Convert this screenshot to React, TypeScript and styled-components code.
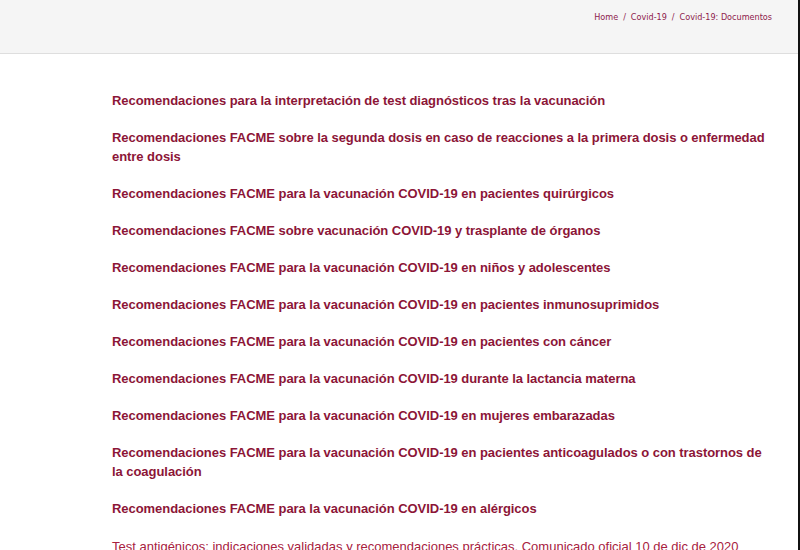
import React from "react";
import styled, { createGlobalStyle } from "styled-components";

const GlobalStyle = createGlobalStyle`
    html, body {
        margin: 0;
        padding: 0;
        background: #ffffff;
        font-family: "Liberation Sans", Arial, sans-serif;
    }
`;

const Page = styled.div`
    display: flex;
    width: 800px;
    height: 550px;
    overflow: hidden;
`;

const Main = styled.div`
    flex: 1;
    display: flex;
    flex-direction: column;
    min-width: 0;
`;

const EdgeBar = styled.div`
    flex-shrink: 0;
    width: 2px;
    background: #111111;
`;

const Header = styled.header`
    flex-shrink: 0;
    display: flex;
    justify-content: flex-end;
    height: 54px;
    padding: 12px 26px 0 0;
    box-sizing: border-box;
    background: #f5f5f5;
    border-bottom: 1px solid #dedede;
`;

const Breadcrumb = styled.nav`
    display: flex;
    gap: 5px;
    font-family: "DejaVu Sans", Verdana, sans-serif;
    font-size: 8.1px;
    line-height: 11px;
    color: #8e1a4c;
`;

const Crumb = styled.a`
    color: inherit;
    text-decoration: none;
`;

const Sep = styled.span`
    color: #8e1a4c;
`;

const Content = styled.section`
    display: flex;
    flex-direction: column;
    gap: 18px;
    padding: 37px 29px 0 112px;
`;

const DocLink = styled.a<{ $plain?: boolean }>`
    display: block;
    font-size: 13px;
    line-height: 19px;
    letter-spacing: ${(p) => (p.$plain ? "0" : "-0.05px")};
    font-weight: ${(p) => (p.$plain ? 400 : 700)};
    color: ${(p) => (p.$plain ? "#a8213e" : "#8c1537")};
    text-decoration: none;
    margin-top: ${(p) => (p.$plain ? "1px" : "0")};
`;

const docs = [
    "Recomendaciones para la interpretación de test diagnósticos tras la vacunación",
    "Recomendaciones FACME sobre la segunda dosis en caso de reacciones a la primera dosis o enfermedad entre dosis",
    "Recomendaciones FACME para la vacunación COVID-19 en pacientes quirúrgicos",
    "Recomendaciones FACME sobre vacunación COVID-19 y trasplante de órganos",
    "Recomendaciones FACME para la vacunación COVID-19 en niños y adolescentes",
    "Recomendaciones FACME para la vacunación COVID-19 en pacientes inmunosuprimidos",
    "Recomendaciones FACME para la vacunación COVID-19 en pacientes con cáncer",
    "Recomendaciones FACME para la vacunación COVID-19 durante la lactancia materna",
    "Recomendaciones FACME para la vacunación COVID-19 en mujeres embarazadas",
    "Recomendaciones FACME para la vacunación COVID-19 en pacientes anticoagulados o con trastornos de la coagulación",
    "Recomendaciones FACME para la vacunación COVID-19 en alérgicos",
];

export default function App() {
    return (
        <>
            <GlobalStyle />
            <Page>
                <Main>
                    <Header>
                        <Breadcrumb>
                            <Crumb href="#">Home</Crumb>
                            <Sep>/</Sep>
                            <Crumb href="#">Covid-19</Crumb>
                            <Sep>/</Sep>
                            <Crumb href="#">Covid-19: Documentos</Crumb>
                        </Breadcrumb>
                    </Header>
                    <Content>
                        {docs.map((d) => (
                            <DocLink key={d} href="#">
                                {d}
                            </DocLink>
                        ))}
                        <DocLink $plain href="#">
                            Test antigénicos: indicaciones validadas y recomendaciones prácticas. Comunicado oficial 10 de dic de 2020
                        </DocLink>
                    </Content>
                </Main>
                <EdgeBar />
            </Page>
        </>
    );
}
